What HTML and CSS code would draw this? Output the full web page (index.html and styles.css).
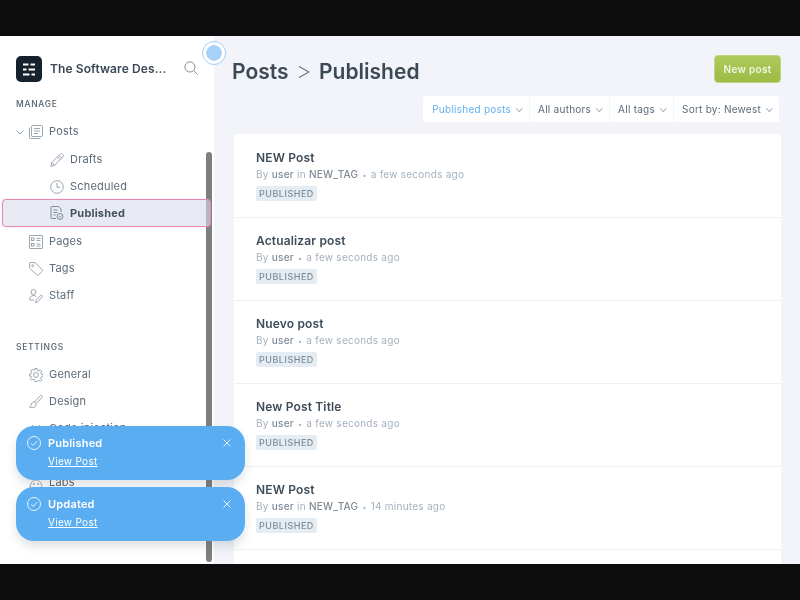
FILE: index.html

```html
<!DOCTYPE html>
<html lang="en">
<head>
  <meta charset="UTF-8" />
  <title>Posts - Published</title>
  <link rel="stylesheet" href="styles.css">
</head>
<body>
  <div class="app">
    <aside class="sidebar">
      <div class="brand">
        <span class="logo">
          <svg width="26" height="26" viewBox="0 0 26 26"><path d="M7 8.500h5.500M14.500 8.500h4.500M7 13.500h3.500M12.500 13.500h6.500M7 18.500h6.500M15.500 18.500h3.500" stroke="#fff" stroke-width="2.200" fill="none"/></svg>
        </span>
        <span class="brand-name">The Software Des...</span>
        <svg class="search" width="14" height="14" viewBox="0 0 16 16" fill="none" stroke="#7c8b99" stroke-width="1.100"><circle cx="6.800" cy="6.800" r="5.800"/><path d="M11 11l4.500 4.500"/></svg>
      </div>

      <div class="nav-head">MANAGE</div>
      <a class="nav-item">
        <svg class="caret" width="8" height="5" viewBox="0 0 8 5" fill="none" stroke="#8e9ca9"><path d="M.5.500L4 4 7.500.500"/></svg>
        <svg class="icon" width="14" height="14" viewBox="0 0 14 14" fill="none" stroke="#7c8b99" stroke-width=".9"><rect x="2.500" y=".5" width="11" height="11" rx="1"/><path d="M.5 2.500v10a1 1 0 0 0 1 1h10M5 3.500h6M5 6h6M5 8.500h4"/></svg>
        Posts
      </a>
      <a class="nav-item sub first">
        <svg class="icon" width="14" height="14" viewBox="0 0 14 14" fill="none" stroke="#7c8b99" stroke-width=".9"><path d="M.8 13.200l1-3.800L10.500.9a1.200 1.200 0 0 1 1.700 0l.9.9a1.200 1.200 0 0 1 0 1.700l-8.500 8.700zM1.800 9.400l2.800 2.800M9 2.400l2.700 2.700M7.500 3.900l2.700 2.700"/></svg>
        Drafts
      </a>
      <a class="nav-item sub">
        <svg class="icon" width="14" height="14" viewBox="0 0 14 14" fill="none" stroke="#7c8b99" stroke-width=".9"><circle cx="7" cy="7" r="6.300"/><path d="M7 3v4.300h3.200"/></svg>
        Scheduled
      </a>
      <a class="nav-item sub active">
        <svg class="icon" width="14" height="14" viewBox="0 0 14 14" fill="none" stroke="#5f6f7e" stroke-width=".9"><path d="M6 12.500H2a1 1 0 0 1-1-1v-10a1 1 0 0 1 1-1h6.500L11 3v3"/><path d="M3.500 4h4M3.500 6.500h4M3.500 9h2"/><circle cx="10" cy="10.500" r="3"/><path d="M8.700 10.500l1 1 1.600-1.800"/></svg>
        Published
      </a>
      <a class="nav-item after-sub">
        <svg class="icon" width="14" height="14" viewBox="0 0 14 14" fill="none" stroke="#7c8b99" stroke-width=".9"><rect x=".5" y=".5" width="13" height="13" rx=".5"/><rect x="2.500" y="3" width="2.500" height="2.500"/><rect x="2.500" y="8.500" width="2.500" height="2.500"/><path d="M7.500 3.500h4M7.500 5.500h4M7.500 9h4M7.500 11h4"/></svg>
        Pages
      </a>
      <a class="nav-item">
        <svg class="icon" width="14" height="14" viewBox="0 0 14 14" fill="none" stroke="#7c8b99" stroke-width=".9"><path d="M.6 1.400a.8.8 0 0 1 .8-.8h4.700l7.300 7.300a.8.8 0 0 1 0 1.100l-4.200 4.200a.8.8 0 0 1-1.100 0L.6 6z"/><circle cx="3.700" cy="3.700" r="1"/></svg>
        Tags
      </a>
      <a class="nav-item">
        <svg class="icon" width="14" height="14" viewBox="0 0 14 14" fill="none" stroke="#7c8b99" stroke-width=".9"><circle cx="4.500" cy="3" r="2.500"/><path d="M.5 11c0-2.800 1.800-4.500 4-4.500 1 0 1.800.3 2.500.8M1 11h4"/><path d="M6.500 13.500l.6-2.300 4.700-4.700a1 1 0 0 1 1.400 1.400l-4.500 4.900z"/></svg>
        Staff
      </a>

      <div class="nav-head settings">SETTINGS</div>
      <a class="nav-item">
        <svg class="icon" width="14" height="14" viewBox="0 0 14 14" fill="none" stroke="#7c8b99" stroke-width=".9"><path d="M6 .5h2l.4 1.800 1.300.6 1.600-1 1.400 1.400-1 1.600.5 1.300 1.800.4v2l-1.800.4-.5 1.300 1 1.600-1.400 1.400-1.600-1-1.300.5L8 13.500H6l-.4-1.800-1.300-.5-1.600 1-1.400-1.400 1-1.600-.5-1.300L.5 8V6l1.800-.4.5-1.300-1-1.600 1.400-1.400 1.600 1 1.300-.6z"/><circle cx="7" cy="7" r="2.400"/></svg>
        General
      </a>
      <a class="nav-item">
        <svg class="icon" width="14" height="14" viewBox="0 0 14 14" fill="none" stroke="#7c8b99" stroke-width=".9"><path d="M5.500 7L11 .9c.6-.6 1.500-.5 1.900 0 .4.500.4 1.200 0 1.700L7.200 8.600zM5.500 7c-1.500-.2-2.800.6-3 2-.2 1.500-.8 2-2 3 2 1 5 1.200 6-1 .4-.8.700-1.600.7-2.400"/></svg>
        Design
      </a>
      <a class="nav-item">
        <svg class="icon" width="14" height="14" viewBox="0 0 14 14" fill="none" stroke="#7c8b99" stroke-width=".9"><path d="M4 3L.5 7 4 11M10 3l3.500 4L10 11"/></svg>
        Code injection
      </a>
      <a class="nav-item">
        <svg class="icon" width="14" height="14" viewBox="0 0 14 14" fill="none" stroke="#7c8b99" stroke-width=".9"><rect x="1" y="1" width="12" height="12" rx="2"/></svg>
        Integrations
      </a>
      <a class="nav-item">
        <svg class="icon" width="14" height="14" viewBox="0 0 14 14" fill="none" stroke="#7c8b99" stroke-width=".9"><path d="M1 12.500C1 8 3 4 7 4s6 4 6 8.500zM5 4l-.5-3M9 4l.5-3"/><circle cx="4.800" cy="8" r=".6"/><circle cx="9.200" cy="8" r=".6"/></svg>
        Labs
      </a>
    </aside>

    <main class="content">
      <header class="top">
        <h1>Posts <svg class="crumb" width="12" height="18" viewBox="0 0 12 18" fill="none" stroke="#5f6f7e" stroke-width="1.100"><path d="M1 3.500l10 5.500-10 5.500"/></svg> Published</h1>
        <button class="new-post">New post</button>
      </header>

      <div class="filters">
        <span class="filter on">Published posts <i class="chev"></i></span>
        <span class="filter">All authors <i class="chev"></i></span>
        <span class="filter">All tags <i class="chev"></i></span>
        <span class="filter">Sort by: Newest <i class="chev"></i></span>
      </div>

      <section class="posts">
        <article class="post">
          <h3>NEW Post</h3>
          <p>By <b>user</b> in <b>NEW_TAG</b> <span class="dot">&bull;</span> a few seconds ago</p>
          <span class="badge">PUBLISHED</span>
        </article>
        <article class="post">
          <h3>Actualizar post</h3>
          <p>By <b>user</b> <span class="dot">&bull;</span> a few seconds ago</p>
          <span class="badge">PUBLISHED</span>
        </article>
        <article class="post">
          <h3>Nuevo post</h3>
          <p>By <b>user</b> <span class="dot">&bull;</span> a few seconds ago</p>
          <span class="badge">PUBLISHED</span>
        </article>
        <article class="post">
          <h3>New Post Title</h3>
          <p>By <b>user</b> <span class="dot">&bull;</span> a few seconds ago</p>
          <span class="badge">PUBLISHED</span>
        </article>
        <article class="post">
          <h3>NEW Post</h3>
          <p>By <b>user</b> in <b>NEW_TAG</b> <span class="dot">&bull;</span> 14 minutes ago</p>
          <span class="badge">PUBLISHED</span>
        </article>
      </section>
    </main>

    <div class="scrollbar"></div>
    <div class="cursor"></div>

    <div class="toasts">
      <div class="toast">
        <svg class="toast-check" width="16" height="16" viewBox="0 0 16 16" fill="none" stroke="#e6f3fe"><circle cx="8" cy="8" r="6.500"/><path d="M5 8.300l2.200 2.200 4-4.500"/></svg>
        <div class="toast-text">
          <strong>Published</strong>
          <a>View Post</a>
        </div>
        <svg class="toast-close" width="8" height="8" viewBox="0 0 8 8" fill="none" stroke="#e3f1fe"><path d="M.5.500l7 7M7.500.500l-7 7"/></svg>
      </div>
      <div class="toast">
        <svg class="toast-check" width="16" height="16" viewBox="0 0 16 16" fill="none" stroke="#e6f3fe"><circle cx="8" cy="8" r="6.500"/><path d="M5 8.300l2.200 2.200 4-4.500"/></svg>
        <div class="toast-text">
          <strong>Updated</strong>
          <a>View Post</a>
        </div>
        <svg class="toast-close" width="8" height="8" viewBox="0 0 8 8" fill="none" stroke="#e3f1fe"><path d="M.5.500l7 7M7.500.500l-7 7"/></svg>
      </div>
    </div>
  </div>
</body>
</html>
```

FILE: styles.css

```css
html, body {
  margin: 0;
  height: 100%;
  background: #0c0c0c;
  overflow: hidden;
}
body {
  padding: 36px 0;
  box-sizing: border-box;
  font-family: Inter, "Liberation Sans", sans-serif;
  color: #3e4c59;
}
.app {
  position: relative;
  display: flex;
  height: 528px;
  overflow: hidden;
  background: #f2f4f9;
  filter: blur(.35px);
}

/* sidebar */
.sidebar {
  width: 214px;
  flex: none;
  background: #fff;
  padding: 20px 0 0 0;
  box-sizing: border-box;
}
.brand {
  display: flex;
  align-items: center;
  padding-left: 16px;
  height: 25px;
}
.logo {
  display: flex;
  width: 26px;
  height: 26px;
  border-radius: 5px;
  background: #15212d;
  margin-right: 8px;
}
.brand-name {
  font-size: 12px;
  font-weight: 600;
  color: #3a4754;
  letter-spacing: .1px;
  white-space: nowrap;
}
.search {
  margin: -2px 0 0 18px;
}
.nav-head {
  font-size: 8.500px;
  font-weight: 500;
  letter-spacing: .7px;
  color: #55636f;
  padding-left: 16px;
  margin-top: 17px;
  margin-bottom: 8px;
  line-height: 12px;
}
.nav-head.settings {
  margin-top: 32px;
  margin-bottom: 8px;
}
.nav-item {
  position: relative;
  display: flex;
  align-items: center;
  height: 27px;
  padding-left: 29px;
  font-size: 11px;
  color: #5c6b79;
  letter-spacing: .2px;
  line-height: 27px;
}
.nav-item .icon {
  margin-right: 6px;
  flex: none;
  opacity: .85;
}
.nav-item .caret {
  position: absolute;
  left: 16px;
  top: 12px;
}
.nav-item.sub {
  padding-left: 50px;
}
.nav-item.first,
.nav-item.after-sub {
  margin-top: 1px;
}
.nav-item.active {
  z-index: 2;
  height: 28px;
  margin: -1px 3px 0 2px;
  padding-left: 47px;
  box-sizing: border-box;
  background: rgba(215, 220, 235, .6);
  border: 1px solid #e889b4;
  border-radius: 4px;
  box-shadow: 0 0 1px #e889b4;
  font-weight: 700;
  color: #45535f;
}

/* page header */
.content {
  flex: 1;
  min-width: 0;
  padding: 19px 19px 0 18px;
}
.top {
  display: flex;
  justify-content: space-between;
  align-items: flex-start;
  height: 41px;
}
h1 {
  margin: 3px 0 0 0;
  font-size: 21px;
  line-height: 28px;
  font-weight: 600;
  color: #3c4854;
}
.crumb {
  margin: 0 4px;
  vertical-align: -2px;
}
.new-post {
  width: 67px;
  height: 28px;
  padding: 0;
  font: 600 10px Inter, "Liberation Sans", sans-serif;
  letter-spacing: .3px;
  color: #f1f6e2;
  border: 1px solid #bcd77e;
  border-radius: 4px;
  background: linear-gradient(#aeca5b, #9dbb45);
}
.filters {
  display: flex;
  justify-content: flex-end;
  margin-right: 2px;
}
.filter {
  display: flex;
  align-items: center;
  height: 26px;
  padding: 0 8px 0 8px;
  background: #fff;
  border-left: 1px solid #f2f4f9;
  font-size: 10px;
  letter-spacing: .25px;
  color: #5c6b79;
  white-space: nowrap;
}
.filter:first-child {
  border-left: 0;
  padding-left: 9px;
  border-radius: 3px 0 0 3px;
}
.filter:last-child {
  border-radius: 0 3px 3px 0;
}
.filter.on {
  color: #62b1f0;
}
.chev {
  width: 3.500px;
  height: 3.500px;
  margin: -2px 0 0 5.500px;
  border-right: 1px solid #a3afba;
  border-bottom: 1px solid #a3afba;
  transform: rotate(45deg);
}

/* post list */
.posts {
  margin: 12px 0 0 2px;
  padding-top: 1px;
  background: #fff;
  border-radius: 4px 4px 0 0;
  height: 500px;
}
.post {
  box-sizing: border-box;
  height: 83px;
  padding: 15px 22px 0 22px;
  border-bottom: 1px solid #eef1f5;
}
.post h3 {
  margin: 0;
  font-size: 12px;
  line-height: 16px;
  font-weight: 600;
  letter-spacing: .15px;
  color: #3e4c59;
}
.post p {
  margin: 1px 0 3px;
  font-size: 10px;
  line-height: 15px;
  letter-spacing: .26px;
  color: #a5b1bd;
}
.post p b {
  font-weight: 500;
  color: #7d8b98;
}
.post .dot {
  font-size: 7px;
  margin: 0 1px;
}
.badge {
  display: block;
  width: fit-content;
  padding: 0 3px;
  border-radius: 2px;
  background: #e5edf4;
  font-size: 9px;
  font-weight: 500;
  line-height: 15px;
  letter-spacing: .5px;
  color: #7d8b98;
}

/* overlays */
.scrollbar {
  position: absolute;
  z-index: 1;
  left: 206px;
  top: 116px;
  width: 6px;
  height: 410px;
  border-radius: 3px;
  background: #7f7f7f;
}
.cursor {
  position: absolute;
  left: 202px;
  top: 5px;
  width: 24px;
  height: 24px;
  box-sizing: border-box;
  border: 1.500px solid #9fd0f8;
  border-radius: 50%;
  background: radial-gradient(circle, #a6d2f8 7.500px, #fff 8px);
}
.toasts {
  position: absolute;
  z-index: 3;
  left: 16px;
  top: 390px;
  display: flex;
  flex-direction: column;
  gap: 7px;
}
.toast {
  position: relative;
  display: flex;
  width: 229px;
  height: 54px;
  box-sizing: border-box;
  padding: 9px 0 0 10px;
  border-radius: 18px;
  background: #5badf2;
  box-shadow: 0 6px 10px rgba(40, 60, 80, .14);
  color: #fff;
}
.toast-check {
  flex: none;
}
.toast-text {
  margin-left: 6px;
  display: flex;
  flex-direction: column;
}
.toast-text strong {
  font-weight: 600;
  font-size: 11px;
  line-height: 16px;
  letter-spacing: .2px;
}
.toast-text a {
  margin-top: 3px;
  font-size: 10px;
  line-height: 15px;
  letter-spacing: .3px;
  text-decoration: underline;
}
.toast-close {
  position: absolute;
  right: 14px;
  top: 13px;
}
```
